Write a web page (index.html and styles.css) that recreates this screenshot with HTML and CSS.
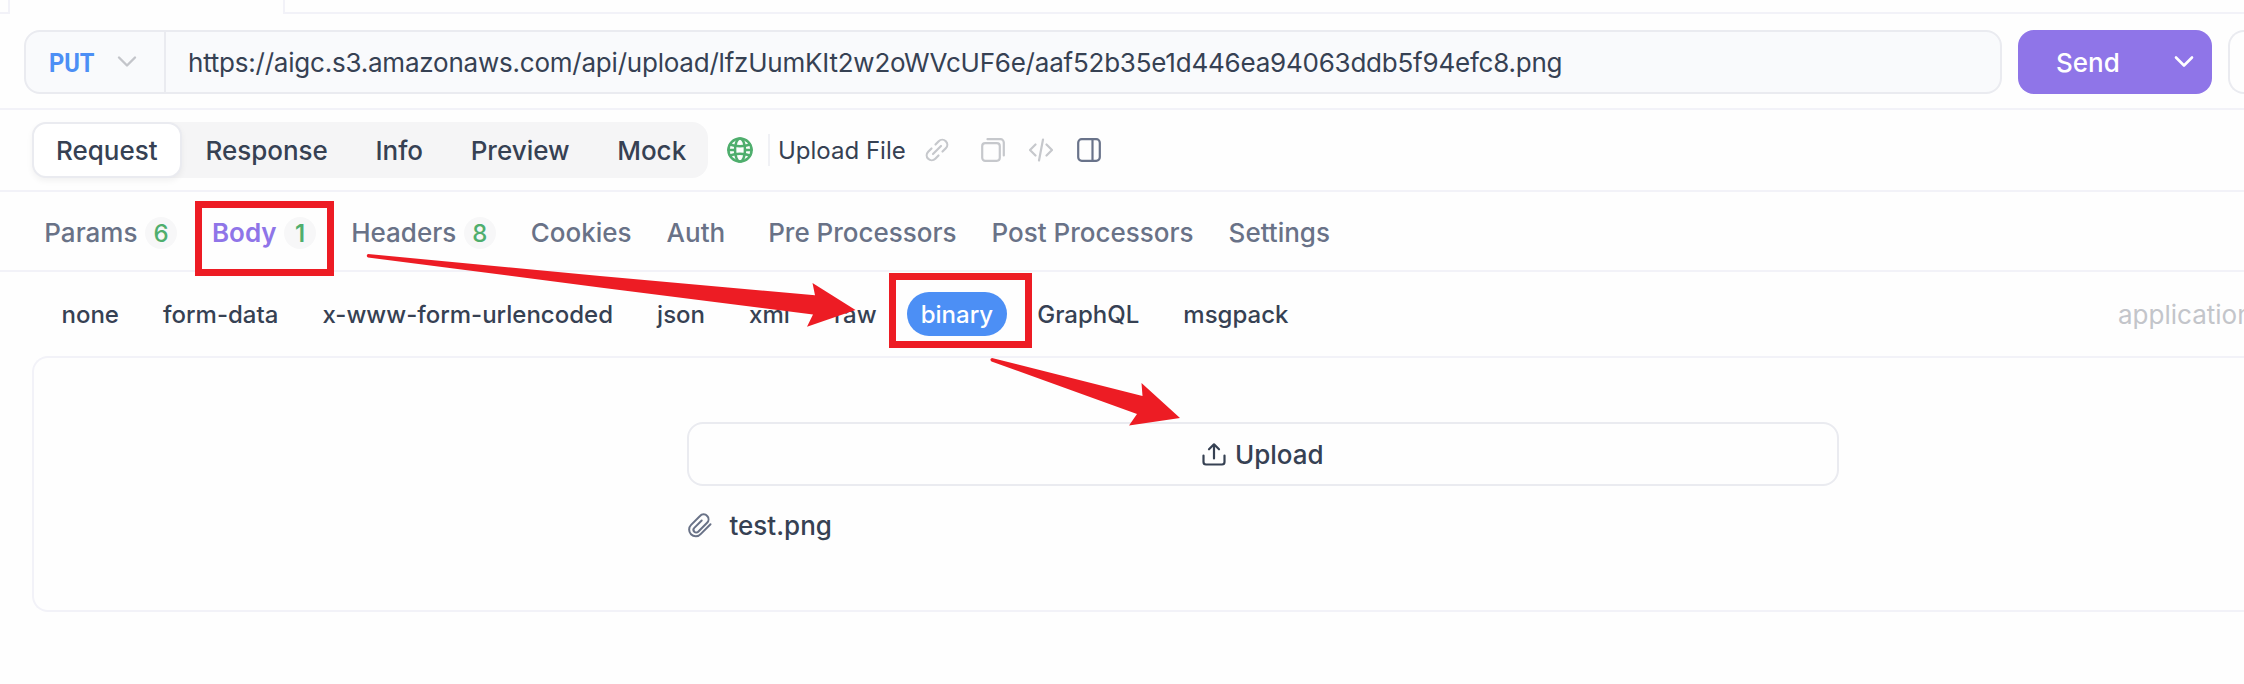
FILE: index.html
```
<!DOCTYPE html>
<html lang="en">
<head>
  <meta charset="UTF-8" />
  <meta name="viewport" content="width=device-width, initial-scale=1.0"/>
  <title>Upload File</title>
  <link rel="stylesheet" href="styles.css">
</head>
<body>

  <div class="tab-strip">
    <div class="strip-left"></div>
    <div class="strip-active"></div>
    <div class="strip-rest"></div>
  </div>

  <div class="url-row">
    <div class="url-bar">
      <div class="method">
        <span class="method-name">PUT</span>
        <svg class="chevron" width="20" height="14" viewBox="0 0 20 14"><path d="M2 2.5l8 8 8-8"/></svg>
      </div>
      <div class="url">https://aigc.s3.amazonaws.com/api/upload/lfzUumKIt2w2oWVcUF6e/aaf52b35e1d446ea94063ddb5f94efc8.png</div>
    </div>
    <div class="send">
      <span>Send</span>
      <svg class="chevron" width="20" height="14" viewBox="0 0 20 14"><path d="M2 2.5l8 8 8-8"/></svg>
    </div>
    <div class="next-btn"></div>
  </div>

  <div class="view-row">
    <div class="segment">
      <div class="seg active">Request</div>
      <div class="seg">Response</div>
      <div class="seg">Info</div>
      <div class="seg">Preview</div>
      <div class="seg">Mock</div>
    </div>
    <svg class="globe" width="28" height="28" viewBox="0 0 28 28">
      <circle cx="14" cy="14" r="11.6"/>
      <ellipse cx="14" cy="14" rx="5" ry="11.6"/>
      <path d="M4 8.500c5.500 2.200 14.500 2.200 20 0M4 19.500c5.500-2.200 14.500-2.200 20 0M2.5 14h6.500M19 14h6.500"/>
    </svg>
    <div class="divider"></div>
    <div class="api-name">Upload File</div>
    <div class="tools">
      <svg class="link" width="24" height="24" viewBox="0 0 24 24">
        <path d="M8 16l8-8M10.500 6.500l3.200-3.300a5 5 0 0 1 7.100 7.100l-3.300 3.200M13.500 17.500l-3.200 3.300a5 5 0 0 1-7.100-7.100l3.300-3.200"/>
      </svg>
      <svg class="copy" width="24" height="24" viewBox="0 0 24 24">
        <rect x="1.200" y="5.200" width="17.600" height="17.600" rx="3"/>
        <path d="M6.500 1.200h13a3.300 3.300 0 0 1 3.300 3.300v13"/>
      </svg>
      <svg class="code" width="24" height="24" viewBox="0 0 24 24">
        <path d="M6.500 6.500L1 12l5.500 5.500M17.500 6.500L23 12l-5.500 5.500M14 1.500l-4 21"/>
      </svg>
      <svg class="panel-icon" width="24" height="24" viewBox="0 0 24 24">
        <rect x="1.200" y="1.200" width="21.600" height="21.600" rx="3.500"/>
        <path d="M15.500 1.200v21.600"/>
      </svg>
    </div>
  </div>

  <div class="param-tabs">
    <div class="tab">Params<span class="count">6</span></div>
    <div class="tab active">Body<span class="count">1</span></div>
    <div class="tab">Headers<span class="count">8</span></div>
    <div class="tab">Cookies</div>
    <div class="tab auth">Auth</div>
    <div class="tab">Pre Processors</div>
    <div class="tab">Post Processors</div>
    <div class="tab">Settings</div>
  </div>

  <div class="body-types">
    <div class="types">
      <div class="type">none</div>
      <div class="type">form-data</div>
      <div class="type">x-www-form-urlencoded</div>
      <div class="type">json</div>
      <div class="type">xml</div>
      <div class="type">raw</div>
      <div class="type active">binary</div>
      <div class="type">GraphQL</div>
      <div class="type">msgpack</div>
    </div>
    <div class="content-type">application</div>
  </div>

  <div class="body-panel">
    <div class="upload-area">
      <div class="upload-btn">
        <svg width="24" height="24" viewBox="0 0 24 24">
          <path d="M12 16.500V2.500M7 7.300l5-5 5 5M1.500 13.500v6.500a2.500 2.500 0 0 0 2.500 2.500h16a2.500 2.500 0 0 0 2.500-2.500v-6.500"/>
        </svg>
        <span>Upload</span>
      </div>
      <div class="file">
        <svg width="26" height="26" viewBox="0 0 26 26">
          <path d="M23.500 12.200l-9.600 9.700a6.600 6.600 0 0 1-9.900.3 6.600 6.600 0 0 1 .1-9.300l8.900-8.900a4.800 4.800 0 0 1 7.200 0 4.800 4.800 0 0 1-.1 6.700l-8.900 9a2.700 2.700 0 0 1-3.900 0 2.700 2.700 0 0 1 0-3.800l7.400-7.400"/>
        </svg>
        <span class="file-name">test.png</span>
      </div>
    </div>
  </div>

  <!-- step marks over the page -->
  <svg class="marks" width="2244" height="684" viewBox="0 0 2244 684">
    <rect x="198.500" y="204.500" width="132" height="68"/>
    <rect x="892.500" y="276.500" width="136" height="68"/>
    <path d="M368 254L600 276L815 295.300L812.500 283L855.500 310L807 326.700L813 314.500L600 287.500L368 257.500Q365.500 255.500 368 254Z"/>
    <path d="M992 358L1142.500 396L1141.500 383L1180 418L1129 425.500L1137 414L991.500 361.500Q989 359 992 358Z"/>
  </svg>

</body>
</html>
```
FILE: styles.css
```
* {
  box-sizing: border-box;
}

body {
  margin: 0;
  height: 684px;
  background-color: #fefefe;
  color: #364153;
  font-family: Inter, "Liberation Sans", sans-serif;
  font-size: 26px;
  position: relative;
  overflow: hidden;
}

svg {
  display: block;
  flex: none;
  fill: none;
  stroke: currentColor;
  stroke-width: 2.2;
  stroke-linecap: round;
  stroke-linejoin: round;
}

/* open request tabs, cut at the top */
.tab-strip {
  display: flex;
  height: 14px;
}

.strip-left {
  width: 10px;
  border-right: 2px solid #f2f2f8;
  border-bottom: 2px solid #f2f2f8;
}

.strip-active {
  width: 273px;
}

.strip-rest {
  flex: 1;
  border-left: 2px solid #f2f2f8;
  border-bottom: 2px solid #f2f2f8;
}

.url-row {
  display: flex;
  height: 96px;
  padding: 16px 0 0 24px;
  border-bottom: 2px solid #f2f2f8;
}

.url-bar {
  display: flex;
  flex: none;
  width: 1978px;
  height: 64px;
  border: 2px solid #eaebf0;
  border-radius: 16px;
  background-color: #f9fafc;
}

.method {
  display: flex;
  align-items: center;
  width: 140px;
  padding-left: 23px;
  border-right: 2px solid #eaebf0;
}

.method-name {
  width: 68px;
  padding-top: 1px;
  color: #4c8ff5;
  font-family: Roboto, sans-serif;
  font-weight: 700;
  transform: scaleX(0.91);
  transform-origin: left;
}

.method .chevron {
  color: #c3c5ca;
  stroke-width: 2.4;
}

.url {
  padding-left: 22px;
  line-height: 61px;
  letter-spacing: -0.22px;
  white-space: nowrap;
}

.send {
  display: flex;
  flex: none;
  align-items: center;
  justify-content: space-between;
  width: 194px;
  height: 64px;
  margin-left: 16px;
  padding: 0 18px 0 38px;
  border-radius: 16px;
  background-color: #8f75e8;
  color: white;
  font-weight: 500;
}

.send .chevron {
  stroke-width: 2.6;
}

/* only its left edge fits */
.next-btn {
  flex: 1;
  height: 64px;
  margin-left: 16px;
  border: 2px solid #eaebf0;
  border-right: none;
  border-radius: 16px 0 0 16px;
}

.view-row {
  display: flex;
  align-items: center;
  height: 82px;
  padding-left: 32px;
  border-bottom: 2px solid #f2f2f8;
}

.segment {
  display: flex;
  height: 56px;
  width: 676px;
  border-radius: 16px;
  background-color: #f5f5f6;
  font-weight: 500;
}

.seg {
  padding: 1px 23.8px 0;
  line-height: 56px;
}

.seg.active {
  padding: 0 22px;
  border: 2px solid #eaebf0;
  border-radius: 14px;
  background-color: white;
  line-height: 54px;
  box-shadow: 0 3px 6px rgba(0, 0, 0, 0.05);
}

.globe {
  margin-left: 18px;
  color: #4fae6d;
  stroke-width: 2.5;
}

.divider {
  width: 2px;
  height: 32px;
  margin-left: 14px;
  background-color: #f0f1f5;
}

.api-name {
  width: 147px;
  margin-left: 8px;
  font-size: 24px;
}

.tools {
  display: flex;
  gap: 24px;
  color: #c6c8cc;
}

.copy {
  margin-left: 8px;
}

.panel-icon {
  color: #69738a;
}

.param-tabs {
  display: flex;
  gap: 15px;
  height: 80px;
  padding-left: 34.3px;
  border-bottom: 2px solid #f2f2f8;
  color: #697287;
  font-weight: 500;
}

.tab {
  display: flex;
  align-items: center;
  height: 80px;
  padding: 3px 10px 0;
  border-bottom: 2px solid transparent;
}

.tab.active {
  border-color: #8f75e8;
  color: #8f75e8;
  font-weight: 600;
}

.tab.auth {
  margin-right: 8px;
}

.count {
  width: 32px;
  height: 32px;
  margin-left: 7.5px;
  border-radius: 50%;
  background-color: #f7f7f8;
  color: #4fae6d;
  font-size: 24px;
  font-weight: 500;
  line-height: 34px;
  text-align: center;
}

.tab.active .count {
  font-weight: 600;
}

.body-types {
  display: flex;
  justify-content: space-between;
  align-items: center;
  height: 84px;
  padding-left: 47.5px;
}

.types {
  display: flex;
  gap: 16.1px;
  font-size: 24px;
  font-weight: 500;
}

.type {
  height: 44px;
  padding: 0 14px;
  border-radius: 22px;
  line-height: 45px;
}

.type.active {
  background-color: #4c8ff5;
  color: white;
}

.content-type {
  width: 126px;
  color: #c3c5ca;
  white-space: nowrap;
  overflow: hidden;
}

/* runs on past the right edge */
.body-panel {
  height: 256px;
  margin-left: 32px;
  padding: 64px 0 0 653px;
  border: 2px solid #f2f2f8;
  border-right: none;
  border-radius: 16px 0 0 16px;
}

.upload-area {
  width: 1152px;
}

.upload-btn {
  display: flex;
  align-items: center;
  justify-content: center;
  gap: 8.500px;
  height: 64px;
  border: 2px solid #eaebf0;
  border-radius: 16px;
  font-weight: 500;
}

.file {
  display: flex;
  align-items: center;
  gap: 16.500px;
  margin-top: 22px;
  font-weight: 500;
}

.file-name {
  padding-top: 2px;
}

.file svg {
  color: #697287;
  stroke-width: 2;
}

.marks {
  position: absolute;
  top: 0;
  left: 0;
}

.marks rect {
  stroke: #ed1c24;
  stroke-width: 7;
  stroke-linejoin: miter;
}

.marks path {
  fill: #ed1c24;
  stroke: none;
}
```
